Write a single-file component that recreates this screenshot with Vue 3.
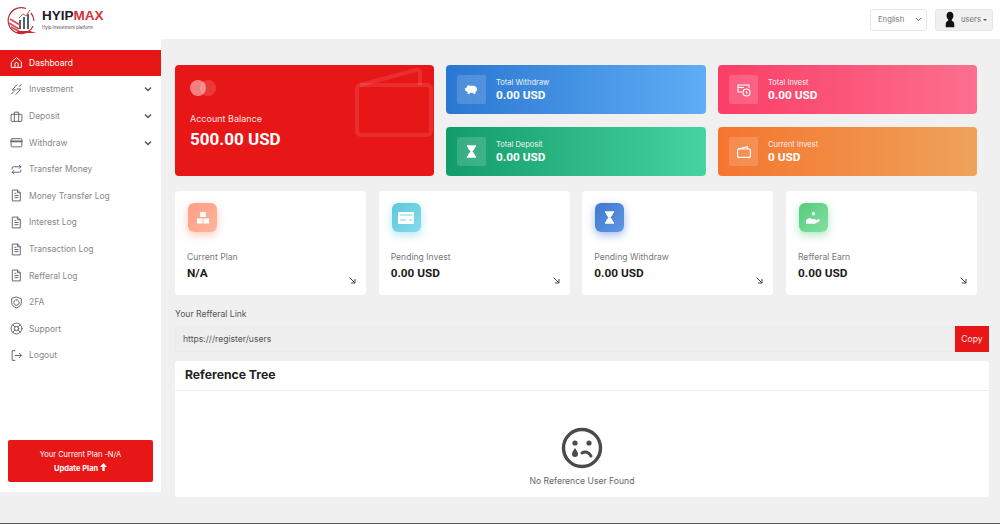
<script setup>
const menu = [
  { label: 'Dashboard', icon: 'home', active: true },
  { label: 'Investment', icon: 'bolt', arrow: true },
  { label: 'Deposit', icon: 'bag', arrow: true },
  { label: 'Withdraw', icon: 'card', arrow: true },
  { label: 'Transfer Money', icon: 'swap' },
  { label: 'Money Transfer Log', icon: 'doc' },
  { label: 'Interest Log', icon: 'doc' },
  { label: 'Transaction Log', icon: 'doc' },
  { label: 'Refferal Log', icon: 'doc' },
  { label: '2FA', icon: 'shield' },
  { label: 'Support', icon: 'buoy' },
  { label: 'Logout', icon: 'logout' }
]
const stats = [
  { label: 'Current Plan', value: 'N/A', cls: 'peach', icon: 'boxes' },
  { label: 'Pending Invest', value: '0.00 USD', cls: 'cyan', icon: 'bill' },
  { label: 'Pending Withdraw', value: '0.00 USD', cls: 'indigo', icon: 'hour' },
  { label: 'Refferal Earn', value: '0.00 USD', cls: 'mint', icon: 'hand' }
]
</script>

<template>
  <div class="page">
    <header class="topbar">
      <div class="logo">
        <svg width="30" height="30" viewBox="0 0 30 30" fill="none">
          <path d="M20 3.500A13 13 0 1 0 27 21" stroke="#b5303a" stroke-width="1.200"/>
          <path d="M25 8A13 13 0 0 1 28 16" stroke="#b5303a" stroke-width="1.200"/>
          <path d="M14 24V15M18 24V12M22 24V9" stroke="#556070" stroke-width="2"/>
          <path d="M4 14l10 6M3 18l10 6M5 22l9 5" stroke="#e2505a" stroke-width="2"/>
          <path d="M13 13l4-4 3 2 4-6" stroke="#e2505a" stroke-width="1"/>
          <path d="M10 28h20l-6-2H12z" fill="#d8202a"/>
        </svg>
        <div class="logo-text">
          <div class="logo-name">HYIP<span>MAX</span></div>
          <div class="logo-sub">Hyip Investment platform</div>
        </div>
      </div>
      <div class="top-actions">
        <div class="lang">
          <span>English</span>
          <svg width="7" height="5" viewBox="0 0 7 5" fill="none"><path d="M1 1l2.500 2.500L6 1" stroke="#666" stroke-width="1"/></svg>
        </div>
        <div class="user">
          <svg width="12" height="17" viewBox="0 0 14 18"><path d="M7 0c2.600 0 4 2 4 4.500 0 2-1 3.600-2 4.500v1.500c2 .8 3 1.500 3 4.500v3H2v-3c0-3 1-3.700 3-4.500V9C4 8.100 3 6.500 3 4.500 3 2 4.400 0 7 0z" fill="#111"/></svg>
          <span>users</span>
          <i class="caret"></i>
        </div>
      </div>
    </header>

    <div class="body">
      <aside class="sidebar">
        <nav class="menu">
          <a v-for="m in menu" :key="m.label" class="item" :class="{ active: m.active }">
            <svg class="mi" width="13" height="13" viewBox="0 0 24 24" fill="none" stroke="currentColor" stroke-width="1.800" stroke-linejoin="round" stroke-linecap="round">
              <template v-if="m.icon === 'home'"><path d="M3 11l9-8 9 8v10H3z"/><path d="M9 21v-6a3 3 0 0 1 6 0v6"/></template>
              <template v-else-if="m.icon === 'bolt'"><path d="M13 3L4 13h7M11 21l9-10h-7"/><path d="M3 20l4-4M17 6l4-3"/></template>
              <template v-else-if="m.icon === 'bag'"><rect x="2" y="8" width="20" height="13" rx="1"/><path d="M8 8V4h8v4M8 8v13M16 8v13"/></template>
              <template v-else-if="m.icon === 'card'"><rect x="2" y="5" width="20" height="15" rx="2"/><path d="M2 10h20" stroke-width="3"/></template>
              <template v-else-if="m.icon === 'swap'"><path d="M4 11V9a2 2 0 0 1 2-2h14M17 4l3 3-3 3M20 13v2a2 2 0 0 1-2 2H4M7 14l-3 3 3 3"/></template>
              <template v-else-if="m.icon === 'doc'"><path d="M5 2h9l5 5v15H5z"/><path d="M14 2v5h5M9 12h6M9 16h6M9 8h2"/></template>
              <template v-else-if="m.icon === 'shield'"><path d="M12 2l9 3v7c0 5-4 8-9 10-5-2-9-5-9-10V5z"/><path d="M12 7a5 5 0 1 0 .01 0"/></template>
              <template v-else-if="m.icon === 'buoy'"><circle cx="12" cy="12" r="10"/><circle cx="12" cy="12" r="4"/><path d="M5 5l4 4M19 5l-4 4M5 19l4-4M19 19l-4-4"/></template>
              <template v-else><path d="M9 3H4v18h5M10 12h11M17 8l4 4-4 4"/></template>
            </svg>
            <span>{{ m.label }}</span>
            <svg v-if="m.arrow" class="chev" width="8" height="6" viewBox="0 0 8 6" fill="none"><path d="M1 1.500l3 3 3-3" stroke="#555" stroke-width="1.500"/></svg>
          </a>
        </nav>
        <div class="plan">
          <div>Your Current Plan -N/A</div>
          <div class="plan-up">Update Plan
            <svg width="7" height="8" viewBox="0 0 7 8"><path d="M3.500 0L7 4H4.700v4H2.300V4H0z" fill="#fff"/></svg>
          </div>
        </div>
      </aside>

      <main class="main">
        <section class="top-grid">
          <div class="balance">
            <svg class="watermark" width="80" height="72" viewBox="0 0 80 72" fill="none" stroke="#fff" stroke-opacity=".1" stroke-width="4">
              <rect x="3" y="18" width="74" height="50" rx="4"/>
              <path d="M6 18L62 3q4-1 4 3v12"/>
            </svg>
            <div class="dots"><i></i><i></i></div>
            <div class="bal-label">Account Balance</div>
            <div class="bal-value">500.00 USD</div>
          </div>
          <div class="mini blue">
            <div class="mini-icon">
              <svg width="13" height="11" viewBox="0 0 14 12" fill="#fff"><path d="M3 1l2 1h4c2 0 4 1.500 4 4 0 1-.5 2-1.500 2.500L11 11H9V9.500H5V11H3l-.5-2.500L1 7.500 0 7V4.500l1.500-.5z"/></svg>
            </div>
            <div><div class="mini-label">Total Withdraw</div><div class="mini-value">0.00 USD</div></div>
          </div>
          <div class="mini pink">
            <div class="mini-icon">
              <svg width="14" height="14" viewBox="0 0 14 14" fill="none" stroke="#fff" stroke-width="1.100"><path d="M5 9H1V2h11v3"/><path d="M1 4.500h6"/><circle cx="9.500" cy="9.500" r="3.500"/><path d="M9.500 8v2h1"/></svg>
            </div>
            <div><div class="mini-label">Total Invest</div><div class="mini-value">0.00 USD</div></div>
          </div>
          <div class="mini green">
            <div class="mini-icon">
              <svg width="9" height="13" viewBox="0 0 10 14" fill="#fff"><path d="M0 0h10v2H9c0 2-2 4-3 5 1 1 3 3 3 5h1v2H0v-2h1c0-2 2-4 3-5-1-1-3-3-3-5H0z"/></svg>
            </div>
            <div><div class="mini-label">Total Deposit</div><div class="mini-value">0.00 USD</div></div>
          </div>
          <div class="mini orange">
            <div class="mini-icon">
              <svg width="14" height="12" viewBox="0 0 14 12" fill="none" stroke="#fff" stroke-width="1.100"><rect x=".6" y="3" width="12.800" height="8.400" rx="1"/><path d="M1 3l9.500-2.400V3"/></svg>
            </div>
            <div><div class="mini-label">Current Invest</div><div class="mini-value">0 USD</div></div>
          </div>
        </section>

        <section class="stats">
          <div v-for="s in stats" :key="s.label" class="stat">
            <div class="stat-icon" :class="s.cls">
              <svg v-if="s.icon === 'boxes'" width="14" height="13" viewBox="0 0 15 14" fill="#fff"><rect x="4.500" y="1" width="6" height="5.500"/><rect x="1" y="8" width="6" height="5.500"/><rect x="8" y="8" width="6" height="5.500"/></svg>
              <svg v-else-if="s.icon === 'bill'" width="16" height="12" viewBox="0 0 16 12"><rect width="16" height="12" rx="1" fill="#fff"/><path d="M2 3h12M2 8h6M11 8h3" stroke="#7fd3e3"/></svg>
              <svg v-else-if="s.icon === 'hour'" width="9" height="13" viewBox="0 0 10 14" fill="#fff"><path d="M0 0h10v2H9c0 2-2 4-3 5 1 1 3 3 3 5h1v2H0v-2h1c0-2 2-4 3-5-1-1-3-3-3-5H0z"/></svg>
              <svg v-else width="14" height="14" viewBox="0 0 16 15" fill="#fff"><circle cx="8.500" cy="2.500" r="2"/><path d="M0 10c3-3 5-2.500 7-1.500h3c1.500 0 1.500 2 0 2H8l5-1 2-.5c1 0 1 1 .5 1.500C13 13 11 14 8 14H0z"/></svg>
            </div>
            <div class="stat-label">{{ s.label }}</div>
            <div class="stat-value">{{ s.value }}</div>
            <svg class="stat-arrow" width="7" height="7" viewBox="0 0 7 7" fill="none" stroke="#444" stroke-width="1"><path d="M.5.500l5.500 5.500M6 2v4H2"/></svg>
          </div>
        </section>

        <div class="ref-label">Your Refferal Link</div>
        <div class="ref-row">
          <div class="ref-input">https:///register/users</div>
          <div class="ref-copy">Copy</div>
        </div>

        <section class="tree">
          <h3 class="tree-head">Reference Tree</h3>
          <div class="tree-body">
            <svg width="42" height="42" viewBox="0 0 42 42" fill="none">
              <circle cx="21" cy="21" r="18.500" stroke="#4a4a4a" stroke-width="3.400"/>
              <circle cx="14" cy="16" r="2.600" fill="#4a4a4a"/>
              <circle cx="28" cy="16" r="2.600" fill="#4a4a4a"/>
              <path d="M14 21c2 3 3 4 3 6a3 3 0 0 1-6 0c0-2 1-3 3-6z" fill="#4a4a4a"/>
              <path d="M21 26c3-2 7-1 9 3" stroke="#4a4a4a" stroke-width="3" stroke-linecap="round"/>
            </svg>
            <div class="tree-empty">No Reference User Found</div>
          </div>
        </section>
      </main>
    </div>
  </div>
</template>

<style>
html, body { margin: 0; background: #f0f0f0; overflow: hidden; }
</style>

<style scoped>
.page {
  height: 524px;
  box-sizing: border-box;
  border-bottom: 1px solid #555;
  background: #f0f0f0;
  font-family: Inter, "Liberation Sans", sans-serif;
  color: #666;
  overflow: hidden;
}
.topbar {
  height: 39px;
  background: #fff;
  display: flex;
  align-items: center;
  justify-content: space-between;
  padding: 0 7px 0 6px;
}
.logo { display: flex; align-items: center; gap: 6px; margin-top: 1px; }
.logo-name { font-size: 13.500px; font-weight: 800; line-height: 14px; color: #1b1b2a; font-family: "Liberation Sans", sans-serif; }
.logo-name span { color: #d7313b; }
.logo-sub { font-size: 4.300px; line-height: 7px; color: #444; margin-top: 1px; }
.top-actions { display: flex; gap: 8px; }
.lang {
  width: 57px; height: 22px; box-sizing: border-box;
  border: 1px solid #e8e8e8; border-radius: 3px;
  display: flex; align-items: center; justify-content: space-between;
  padding: 0 4px 0 7px; font-size: 7.700px; color: #777; background: #fff;
}
.user {
  width: 58px; height: 22px; box-sizing: border-box;
  border: 1px solid #e6e6e6; border-radius: 3px; background: #f0f0f0;
  display: flex; align-items: center; padding-left: 8px; gap: 5px;
  font-size: 7.700px; color: #777;
}
.caret { border: 2.200px solid transparent; border-top-color: #555; border-bottom: 0; margin-left: -3px; }

.body { display: flex; align-items: flex-start; }
.sidebar {
  width: 161px; height: 453px; flex: none; background: #fff;
  display: flex; flex-direction: column; justify-content: space-between;
  box-sizing: border-box; padding: 10.600px 0 10px;
}
.menu { display: flex; flex-direction: column; }
.item {
  height: 26.600px; display: flex; align-items: center;
  padding: 0 9px 0 10px; gap: 6px; font-size: 8.500px; color: #888;
}
.item .mi { flex: none; color: #666; }
.item.active { background: #e81717; color: #fff; }
.item.active .mi { color: #fff; }
.chev { margin-left: auto; }
.plan {
  margin: 0 8px; height: 42px; background: #e81717; border-radius: 2px;
  color: #fff; font-size: 7.500px; text-align: center;
  display: flex; flex-direction: column; justify-content: center; gap: 4px;
}
.plan-up { font-weight: 700; }

.main { flex: 1; padding: 26px 11px 0 14px; min-width: 0; }
.top-grid {
  width: 802px; display: grid;
  grid-template-columns: 259px 260px 259px;
  grid-template-rows: 49px 49px; gap: 13px 12px;
}
.balance {
  grid-row: span 2; background: #e81717; border-radius: 4px; position: relative;
  padding: 15px 15px; box-sizing: border-box; color: #fff; overflow: hidden;
}
.watermark { position: absolute; right: 0; top: 2px; }
.dots { display: flex; height: 16px; }
.dots i { width: 16px; height: 16px; border-radius: 50%; background: rgba(255,255,255,.45); }
.dots i + i { margin-left: -6px; background: rgba(255,255,255,.15); }
.bal-label { font-size: 9px; margin-top: 17px; line-height: 12px; color: #ffe4e4; }
.bal-value { font-size: 17px; font-weight: 700; margin-top: 4px; line-height: 20px; font-family: Roboto, sans-serif; }
.mini { border-radius: 4px; display: flex; align-items: center; padding-left: 11px; gap: 10px; color: #fff; }
.blue { background: linear-gradient(90deg, #2a77d2, #5fadf5); }
.pink { background: linear-gradient(90deg, #fb3e67, #fc6f8e); }
.green { background: linear-gradient(90deg, #129c69, #47d3a2); }
.orange { background: linear-gradient(90deg, #f5752f, #eea35a); }
.mini-icon {
  width: 29px; height: 29px; border-radius: 2px; background: rgba(255,255,255,.16);
  display: flex; align-items: center; justify-content: center;
}
.mini-label { font-size: 7.500px; line-height: 10px; color: #f2f2f2; }
.mini-value { font-size: 11.800px; font-weight: 700; line-height: 14px; font-family: Roboto, sans-serif; }

.stats { width: 802px; display: grid; grid-template-columns: repeat(4, 191px); gap: 12.660px; margin-top: 15px; }
.stat {
  height: 104px; background: #fff; border-radius: 4px; position: relative;
  box-sizing: border-box; padding: 12px 12px;
}
.stat-icon {
  width: 29px; height: 29px; border-radius: 6px; margin-left: 1px;
  display: flex; align-items: center; justify-content: center;
}
.peach { background: linear-gradient(135deg, #ff9f85, #ffb39c); box-shadow: 0 3px 8px rgba(255,150,120,.5); }
.cyan { background: linear-gradient(135deg, #5cc8de, #86dbe9); box-shadow: 0 3px 8px rgba(110,210,230,.5); }
.indigo { background: linear-gradient(135deg, #3f78cf, #6096e2); box-shadow: 0 3px 8px rgba(70,120,210,.5); }
.mint { background: linear-gradient(135deg, #54cb7d, #84e0a0); box-shadow: 0 3px 8px rgba(90,210,130,.5); }
.stat-label { font-size: 8.600px; line-height: 12px; margin-top: 19px; color: #777; }
.stat-value { font-size: 11.800px; font-weight: 700; line-height: 15px; margin-top: 3px; color: #1c1c1c; font-family: Roboto, sans-serif; }
.stat-arrow { position: absolute; right: 10px; top: 86px; }

.ref-label { font-size: 8.600px; line-height: 12px; margin-top: 13px; color: #555; }
.ref-row { display: flex; height: 26px; margin-top: 6px; }
.ref-input {
  flex: 1; background: #eeeeee; border: 1px solid #ebebeb; border-right: 0;
  box-sizing: border-box; display: flex; align-items: center; padding-left: 7px;
  font-size: 8.600px; color: #555;
}
.ref-copy {
  width: 34px; background: #e81717; color: #ffe4e4; font-size: 8.600px;
  display: flex; align-items: center; justify-content: center;
}
.tree { background: #fff; margin-top: 9px; height: 136px; border-radius: 3px; }
.tree-head {
  margin: 0; height: 30px; box-sizing: border-box; padding: 0 0 2px 10px;
  display: flex; align-items: center; border-bottom: 1px solid #eee;
  font-size: 12.200px; font-weight: 700; color: #222;
}
.tree-body { display: flex; flex-direction: column; align-items: center; padding-top: 36px; }
.tree-empty { font-size: 8.600px; color: #666; margin-top: 6px; line-height: 12px; }
</style>
